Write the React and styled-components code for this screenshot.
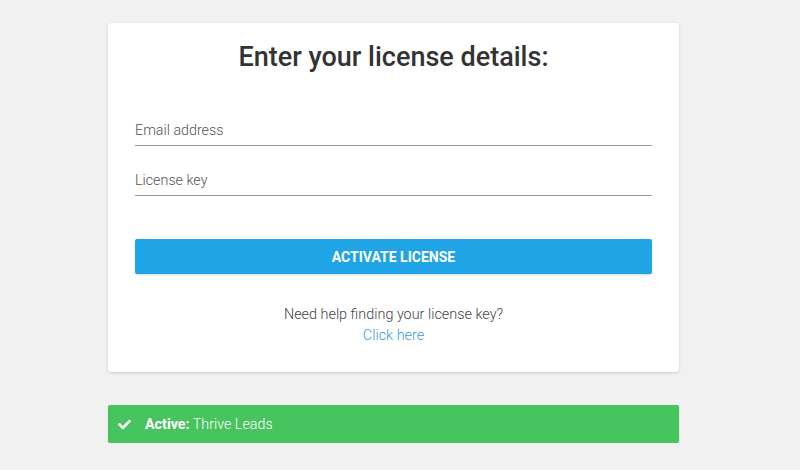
import React from 'react';
import styled, { createGlobalStyle } from 'styled-components';
import { FaCheck } from 'react-icons/fa';

const GlobalStyle = createGlobalStyle`
  body {
    margin: 0;
    background: #f1f1f1;
    font-family: Roboto, "Liberation Sans", sans-serif;
  }
`;

const Page = styled.div`
  padding: 23px 0 0 108px;
  width: 571px;
`;

const Card = styled.div`
  background: #ffffff;
  border-radius: 3px;
  box-shadow: 0 1px 3px rgba(0, 0, 0, 0.16);
  padding: 20px 27px 26px;
  display: flex;
  flex-direction: column;
`;

const Title = styled.h1`
  margin: 0 0 44px;
  font-size: 27px;
  line-height: 28px;
  font-weight: 500;
  color: #333333;
  text-align: center;
`;

const Field = styled.input`
  display: block;
  height: 30px;
  padding: 0;
  border: none;
  border-bottom: 1px solid #9a9a9a;
  outline: none;
  background: transparent;
  font-family: Roboto, "Liberation Sans", sans-serif;
  font-size: 14.3px;
  font-weight: 300;
  color: #444;
  margin-bottom: ${(p) => p.$gap}px;

  &::placeholder {
    color: #555555;
    opacity: 1;
  }
`;

const Button = styled.button`
  height: 35px;
  border: none;
  border-radius: 2px;
  background: #1fa5e5;
  color: #ffffff;
  font-family: Roboto, "Liberation Sans", sans-serif;
  font-size: 14px;
  font-weight: 700;
  text-transform: uppercase;
  box-shadow: 0 1px 2px rgba(0, 0, 0, 0.15);
  cursor: pointer;
`;

const Help = styled.div`
  margin-top: 30px;
  text-align: center;
  font-size: 14.4px;
  line-height: 21px;
  font-weight: 300;
  color: #444444;
`;

const Link = styled.a`
  display: block;
  color: #3a9bd8;
  text-decoration: none;
`;

const Status = styled.div`
  margin-top: 33px;
  height: 38px;
  border-radius: 2px;
  background: #47c35f;
  box-shadow: 0 1px 2px rgba(0, 0, 0, 0.12);
  display: flex;
  align-items: center;
  padding-left: 10px;
  gap: 14px;
  color: #ffffff;
  font-size: 14.3px;
  font-weight: 300;

  svg {
    width: 13px;
    height: 13px;
  }

  b {
    font-weight: 700;
  }
`;

const App = () => {
  return (
    <>
      <GlobalStyle />
      <Page>
        <Card>
          <Title>Enter your license details:</Title>
          <Field type="email" placeholder="Email address" $gap={19} />
          <Field type="text" placeholder="License key" $gap={43} />
          <Button>Activate License</Button>
          <Help>
            Need help finding your license key?
            <Link href="#">Click here</Link>
          </Help>
        </Card>
        <Status>
          <FaCheck />
          <span>
            <b>Active:</b> Thrive Leads
          </span>
        </Status>
      </Page>
    </>
  );
};

export default App;
